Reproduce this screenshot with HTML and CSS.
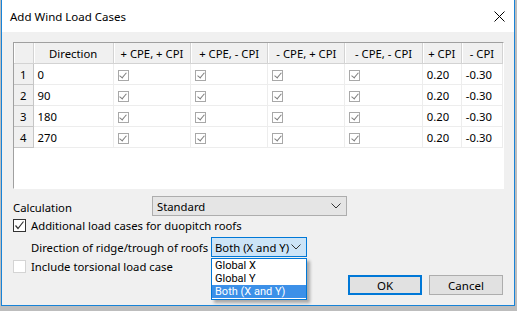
FILE: index.html
```html
<!DOCTYPE html>
<html>
<head>
<meta charset="utf-8">
<link rel="stylesheet" href="styles.css">
</head>
<body>
<div class="window">
  <div class="titlebar">
    <span class="title">Add Wind Load Cases</span>
    <svg class="close" width="11" height="11" viewBox="0 0 11 11"><path d="M0.5 0.5 L10.5 10.5 M10.5 0.5 L0.5 10.5" stroke="#000" stroke-width="1" fill="none"/></svg>
  </div>
  <div class="content">
    <div class="gridbox">
      <table class="grid">
        <colgroup>
          <col class="c-rh"><col class="c-dir"><col class="c-cb"><col class="c-cb"><col class="c-cb"><col class="c-cb"><col class="c-p"><col class="c-m">
        </colgroup>
        <thead>
          <tr>
            <th></th><th>Direction</th><th>+ CPE, + CPI</th><th>+ CPE, - CPI</th><th>- CPE, + CPI</th><th>- CPE, - CPI</th><th>+ CPI</th><th>- CPI</th>
          </tr>
        </thead>
        <tbody>
          <tr><td class="rh">1</td><td>0</td><td><span class="cb"></span></td><td><span class="cb"></span></td><td><span class="cb"></span></td><td><span class="cb"></span></td><td>0.20</td><td>-0.30</td></tr>
          <tr><td class="rh">2</td><td>90</td><td><span class="cb"></span></td><td><span class="cb"></span></td><td><span class="cb"></span></td><td><span class="cb"></span></td><td>0.20</td><td>-0.30</td></tr>
          <tr><td class="rh">3</td><td>180</td><td><span class="cb"></span></td><td><span class="cb"></span></td><td><span class="cb"></span></td><td><span class="cb"></span></td><td>0.20</td><td>-0.30</td></tr>
          <tr><td class="rh">4</td><td>270</td><td><span class="cb"></span></td><td><span class="cb"></span></td><td><span class="cb"></span></td><td><span class="cb"></span></td><td>0.20</td><td>-0.30</td></tr>
        </tbody>
      </table>
    </div>

    <div class="line calc">
      <span class="lbl">Calculation</span>
      <div class="select std"><span>Standard</span><svg class="chev" width="10" height="6" viewBox="0 0 10 6"><path d="M0.5 0.5 L5 5 L9.5 0.5" stroke="#333" stroke-width="1" fill="none"/></svg></div>
    </div>

    <div class="line chk1">
      <span class="box checked"><svg width="11" height="11" viewBox="0 0 11 11"><path d="M1.5 5.5 L4 8.5 L9.5 1.5" stroke="#333" stroke-width="1.2" fill="none"/></svg></span>
      <span class="lbl">Additional load cases for duopitch roofs</span>
    </div>

    <div class="line dirline">
      <span class="lbl">Direction of ridge/trough of roofs</span>
      <div class="dd">
        <div class="select open"><span>Both (X and Y)</span><svg class="chev" width="10" height="6" viewBox="0 0 10 6"><path d="M0.5 0.5 L5 5 L9.5 0.5" stroke="#333" stroke-width="1" fill="none"/></svg></div>
        <ul class="list">
          <li>Global X</li>
          <li>Global Y</li>
          <li class="sel">Both (X and Y)</li>
        </ul>
      </div>
    </div>

    <div class="line bottom">
      <div class="chk2">
        <span class="box"></span>
        <span class="lbl">Include torsional load case</span>
      </div>
      <div class="buttons">
        <button class="btn default">OK</button>
        <button class="btn">Cancel</button>
      </div>
    </div>
  </div>
</div>
</body>
</html>
```

FILE: styles.css
```css
html, body {
  margin: 0;
  padding: 0;
}
body {
  width: 517px;
  height: 311px;
  background: #bdbdbd;
  font-family: "Noto Sans", "Open Sans", sans-serif;
  font-size: 11.3px;
  color: #000;
  overflow: hidden;
  white-space: nowrap;
}
.window {
  margin-left: 1px;
  width: 514px;
  height: 306px;
  box-sizing: border-box;
  border: 1px solid #1883d7;
  border-top: none;
  background: #f0f0f0;
  display: flex;
  flex-direction: column;
}
.titlebar {
  height: 32px;
  flex: none;
  background: #fff;
  display: flex;
  align-items: center;
  justify-content: space-between;
  padding: 0 9px 0 8px;
}
.title {
  font-size: 11.5px;
}
.close {
  display: block;
}
.content {
  padding: 10px 10px 0 11px;
  display: flex;
  flex-direction: column;
}
.gridbox {
  height: 147px;
  flex: none;
  box-sizing: border-box;
  border-left: 1px solid #a0a0a0;
  border-top: 1px solid #a0a0a0;
  border-right: 1px solid #fff;
  border-bottom: 1px solid #fff;
  background: #fff;
}
.grid {
  border-collapse: collapse;
  table-layout: fixed;
  width: 489px;
}
.c-rh { width: 19px; }
.c-dir { width: 80px; }
.c-cb { width: 77px; }
.c-p { width: 39px; }
.c-m { width: 41px; }
.grid th {
  height: 20px;
  padding: 0;
  font-weight: normal;
  background: #f0f0f0;
  border-right: 1px solid #d3d3d3;
  border-bottom: 1px solid #d3d3d3;
  box-shadow: inset 1px 0 #fff;
  text-align: center;
}
.grid td {
  height: 20px;
  padding: 0 0 0 4px;
  border-right: 1px solid #ededed;
  border-bottom: 1px solid #ededed;
}
.grid td.rh {
  background: #f0f0f0;
  padding: 0;
  text-align: center;
  border-right: 1px solid #c6c6c6;
  border-bottom: 1px solid #c6c6c6;
}
.cb {
  display: inline-block;
  vertical-align: middle;
  width: 11px;
  height: 11px;
  box-sizing: border-box;
  border: 1px solid #a8a8a8;
  position: relative;
}
.cb::after {
  content: "";
  position: absolute;
  left: 2.5px;
  top: 0px;
  width: 3px;
  height: 6px;
  border-right: 1.4px solid #7e7e7e;
  border-bottom: 1.4px solid #7e7e7e;
  transform: rotate(40deg);
}
.line {
  display: flex;
  align-items: center;
  flex: none;
}
.calc {
  margin-top: 7px;
  height: 20px;
}
.calc .lbl {
  width: 139px;
  flex: none;
  position: relative;
  top: 1px;
}
.select {
  height: 20px;
  box-sizing: border-box;
  display: flex;
  align-items: center;
  justify-content: space-between;
  padding: 0 3px 0 4px;
  flex: none;
}
.std {
  width: 195px;
  background: #e5e5e5;
  border: 1px solid #adadad;
}
.chev {
  margin-right: 2px;
  flex: none;
}
.chk1 {
  margin-top: 3px;
  height: 13px;
}
.box {
  width: 13px;
  height: 13px;
  box-sizing: border-box;
  border: 1px solid #333;
  background: #fff;
  display: inline-flex;
  align-items: center;
  justify-content: center;
  flex: none;
}
.box svg { display: block; }
.chk1 .lbl, .chk2 .lbl {
  margin-left: 5px;
}
.dirline {
  margin-top: 5px;
  height: 20px;
  padding-left: 18px;
}
.dirline .lbl {
  width: 180px;
  flex: none;
}
.dd {
  position: relative;
}
.open {
  width: 96px;
  background: #cce4f7;
  border: 1px solid #0078d7;
  padding-left: 3px;
}
.list {
  position: absolute;
  left: 0;
  top: 21px;
  width: 96px;
  box-sizing: border-box;
  margin: 0;
  padding: 0;
  list-style: none;
  background: #fff;
  border: 1px solid #0078d7;
  box-shadow: 3px 3px 3px rgba(0,0,0,0.3);
  z-index: 2;
}
.list li {
  height: 13px;
  line-height: 13px;
  font-family: Roboto, "Noto Sans", sans-serif;
  font-size: 11px;
  padding-left: 3px;
  overflow: hidden;
}
.list li.sel {
  background: #3c90e8;
  color: #fff;
  margin-bottom: 1px;
}
.bottom {
  margin-top: 3px;
  align-items: flex-start;
  justify-content: space-between;
}
.chk2 {
  display: flex;
  align-items: center;
  height: 13px;
}
.chk2 .box {
  border-color: #d4d4d4;
}
.buttons {
  display: flex;
  gap: 7px;
  margin-top: 15px;
  margin-right: 1px;
}
.btn {
  width: 74px;
  height: 20px;
  box-sizing: border-box;
  font-family: inherit;
  font-size: 11.5px;
  background: #e1e1e1;
  border: 1px solid #adadad;
  padding: 0;
  color: #000;
}
.btn.default {
  border: 2px solid #0078d7;
}
```
